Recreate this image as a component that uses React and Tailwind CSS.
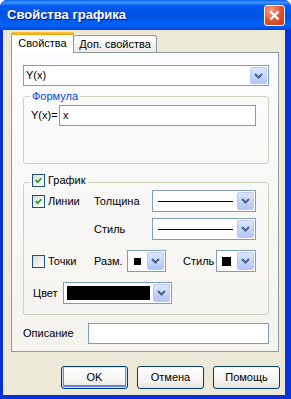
import React from 'react'

function Arrow() {
  return (
    <div className="w-[17px] m-px shrink-0 rounded-[2px] border border-[#b8cbf5] bg-[linear-gradient(to_bottom,#dce7fe,#c1d3fb_60%,#b1c6f7)] flex items-center justify-center">
      <svg width="9" height="6" viewBox="0 0 9 6">
        <path d="M1 1l3.5 3.5L8 1" stroke="#4d6185" strokeWidth="2" fill="none" />
      </svg>
    </div>
  )
}

function Combo({ className, children }) {
  return (
    <div className={`flex border border-[#7f9db9] bg-white ${className}`}>
      <div className="flex-1 flex items-center min-w-0">{children}</div>
      <Arrow />
    </div>
  )
}

function Check({ checked }) {
  return (
    <span className="w-[13px] h-[13px] shrink-0 border border-[#1c5180] bg-[linear-gradient(135deg,#dcdcd7,#ffffff)] flex items-center justify-center">
      {checked && (
        <svg width="7" height="7" viewBox="0 0 7 7">
          <path d="M0.7 3.2l2 2L6.3 1.2" stroke="#21a121" strokeWidth="1.7" fill="none" />
        </svg>
      )}
    </span>
  )
}

function Line() {
  return <div className="ml-[5px] mr-[3px] flex-1 h-px bg-black" />
}

function Button({ children, def }) {
  return (
    <button
      className={`w-[67px] h-[23px] rounded-[3px] border border-[#003c74] bg-[linear-gradient(to_bottom,#ffffff,#f3f2ee_70%,#e3e0d6)] text-[11px] text-black ${def ? 'shadow-[inset_0_0_0_1px_#cee7ff,inset_0_-1px_0_2px_#6982ee]' : ''}`}
    >
      {children}
    </button>
  )
}

export default function App() {
  return (
    <div className="w-[291px] h-[399px] flex flex-col bg-[#0831d9] rounded-t-[7px] overflow-hidden font-['Liberation_Sans',Arial,sans-serif] text-[11px] text-black">
      {/* заголовок */}
      <div className="h-[30px] shrink-0 flex items-center justify-between pl-[7px] pr-[6px] bg-[linear-gradient(to_bottom,#0a5fe8_0%,#3d95ff_8%,#0058ee_20%,#0054e3_55%,#0063f9_85%,#0046d5_100%)]">
        <span className="text-white font-bold text-[13px] [text-shadow:1px_1px_0_#0a1883]">Свойства графика</span>
        <div className="w-[21px] h-[21px] rounded-[3px] border border-white bg-[radial-gradient(circle_at_30%_25%,#f0a08a,#e2502a_55%,#c13a14)] flex items-center justify-center">
          <svg width="11" height="11" viewBox="0 0 11 11">
            <path d="M1.5 1.5l8 8M9.5 1.5l-8 8" stroke="white" strokeWidth="2.2" />
          </svg>
        </div>
      </div>

      <div className="flex-1 ml-[3px] mr-[6px] mb-[4px] bg-[#ece9d8] flex flex-col">
        {/* вкладки */}
        <div className="flex items-end mt-[2px] ml-[8px] h-[20px]">
          <div className="w-[63px] h-[21px] -mb-px z-10 rounded-t-[3px] border-x border-[#919b9c] bg-white flex flex-col">
            <div className="h-[3px] rounded-t-[3px] bg-[linear-gradient(to_bottom,#ffc83c,#e6a012)] -mx-px" />
            <div className="flex-1 flex items-center justify-center pb-[1px]">Свойства</div>
          </div>
          <div className="w-[83px] h-[17px] rounded-t-[3px] border border-b-0 border-l-0 border-[#919b9c] bg-[linear-gradient(to_bottom,#ffffff,#ecebe6)] flex items-center justify-center">
            Доп. свойства
          </div>
        </div>

        {/* панель */}
        <div className="ml-[8px] w-[268px] h-[300px] border border-[#919b9c] bg-[linear-gradient(to_bottom,#fcfcfe,#f4f3ee)] pl-[11px] pt-[12px]">
          <Combo className="w-[246px] h-[21px]">
            <span className="pl-[2px]">Y(x)</span>
          </Combo>

          <fieldset className="mt-[4px] w-[246px] border border-[#d0d0bf] rounded-[3px] pb-[37px]">
            <legend className="ml-[6px] px-[2px] leading-[13px] text-[#0046d5]">Формула</legend>
            <div className="flex items-center pl-[7px] pr-[12px] mt-[2px]">
              <span>Y(x)=</span>
              <div className="ml-auto w-[197px] h-[21px] border border-[#7f9db9] bg-white flex items-center pl-[3px]">x</div>
            </div>
          </fieldset>

          <fieldset className="mt-[10px] w-[246px] border border-[#d0d0bf] rounded-[3px] pb-[10px] pl-[8px]">
            <legend className="ml-[-2px] px-[2px] h-[16px] flex items-start gap-[3px] leading-[13px]">
              <Check checked />
              <span>График</span>
            </legend>
            <div className="flex items-center h-[22px]">
              <div className="w-[62px] flex items-center gap-[3px]">
                <Check checked />
                <span>Линии</span>
              </div>
              <span className="w-[58px]">Толщина</span>
              <Combo className="w-[104px] h-[22px]">
                <Line />
              </Combo>
            </div>
            <div className="flex items-center h-[22px] mt-[6px] pl-[62px]">
              <span className="w-[58px]">Стиль</span>
              <Combo className="w-[104px] h-[22px]">
                <Line />
              </Combo>
            </div>
            <div className="flex items-center h-[22px] mt-[10px]">
              <div className="w-[62px] flex items-center gap-[3px]">
                <Check />
                <span>Точки</span>
              </div>
              <span className="w-[33px]">Разм.</span>
              <Combo className="w-[39px] h-[22px]">
                <div className="ml-[6px] w-[7px] h-[7px] bg-black" />
              </Combo>
              <span className="ml-[17px] w-[33px]">Стиль</span>
              <Combo className="w-[40px] h-[22px]">
                <div className="ml-[5px] w-[9px] h-[9px] bg-black" />
              </Combo>
            </div>
            <div className="flex items-center h-[22px] mt-[10px] pl-[1px]">
              <span className="w-[30px]">Цвет</span>
              <Combo className="w-[109px] h-[22px]">
                <div className="ml-[3px] mr-[2px] flex-1 h-[14px] bg-black" />
              </Combo>
            </div>
          </fieldset>

          <div className="mt-[8px] w-[246px] flex items-center">
            <span>Описание</span>
            <div className="ml-auto w-[181px] h-[21px] border border-[#7f9db9] bg-white" />
          </div>
        </div>

        {/* кнопки */}
        <div className="mt-[14px] flex justify-end gap-[9px] mr-[5px]">
          <Button def>OK</Button>
          <Button>Отмена</Button>
          <Button>Помощь</Button>
        </div>
      </div>
    </div>
  )
}
